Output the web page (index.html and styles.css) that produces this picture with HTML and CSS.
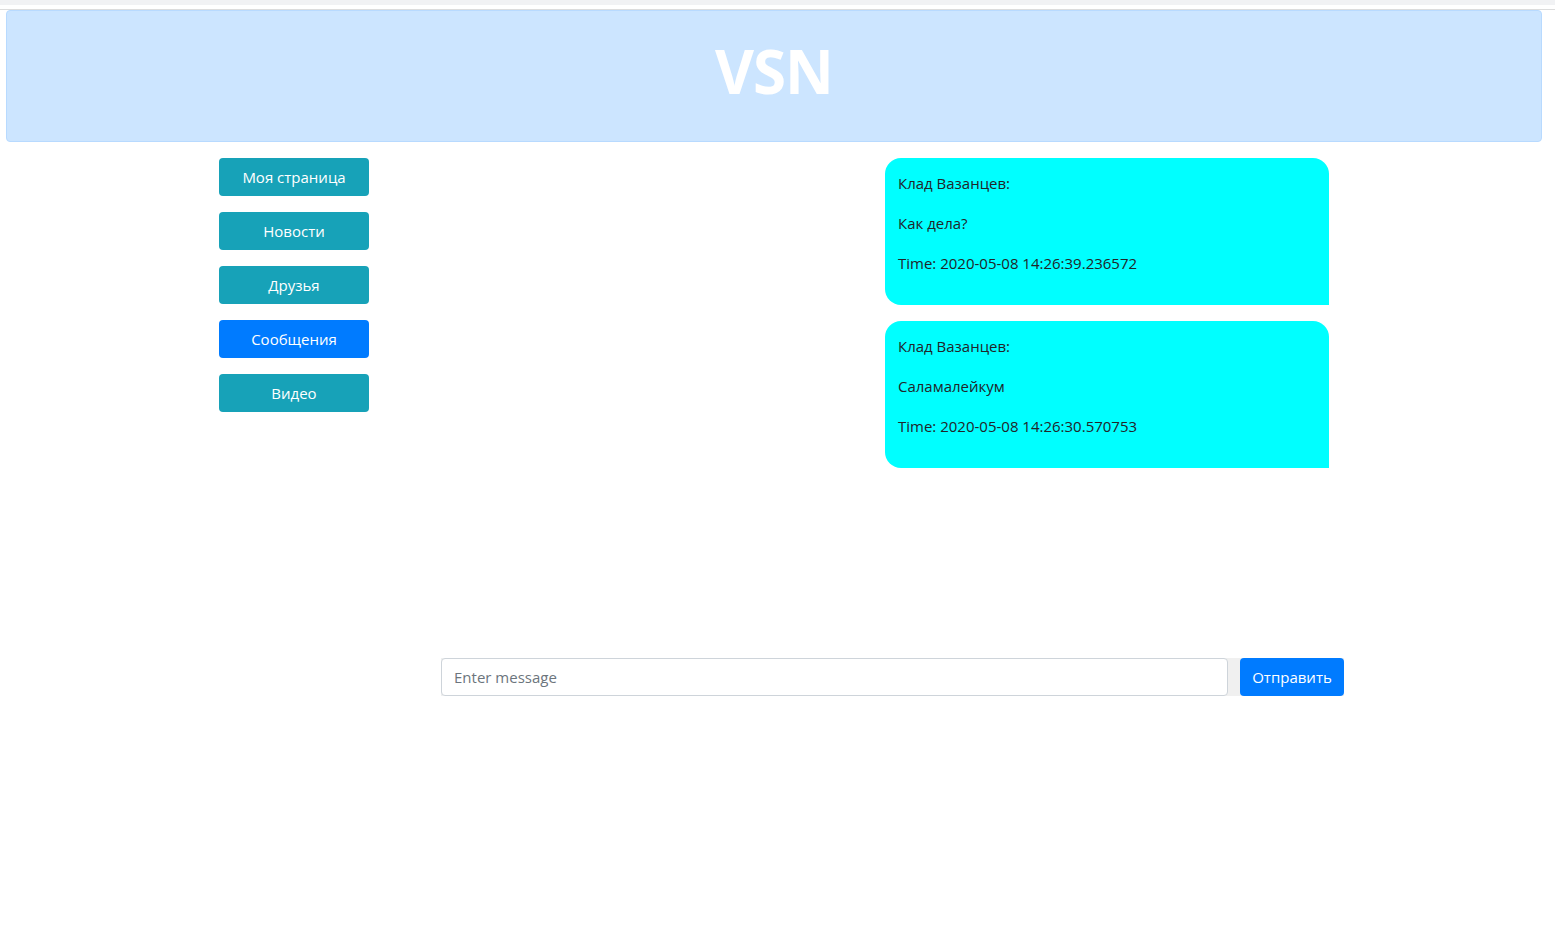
FILE: index.html
```html
<!DOCTYPE html>
<html lang="ru">
<head>
<meta charset="utf-8">
<title>VSN</title>
<link rel="stylesheet" href="styles.css">
</head>
<body>
<div class="topbar"></div>
<div class="topline"></div>
<header class="banner"><h1 class="logo">VSN</h1></header>
<main class="layout">
  <nav class="sidebar">
    <a class="nav-btn info" href="#">Моя страница</a>
    <a class="nav-btn info" href="#">Новости</a>
    <a class="nav-btn info" href="#">Друзья</a>
    <a class="nav-btn primary" href="#">Сообщения</a>
    <a class="nav-btn info" href="#">Видео</a>
  </nav>
  <section class="chat">
    <div class="messages">
      <div class="bubble">
        <p>Клад Вазанцев:</p>
        <p>Как дела?</p>
        <p>Time: 2020-05-08 14:26:39.236572</p>
      </div>
      <div class="bubble">
        <p>Клад Вазанцев:</p>
        <p>Саламалейкум</p>
        <p>Time: 2020-05-08 14:26:30.570753</p>
      </div>
    </div>
    <form class="send-form">
      <input class="msg-input" type="text" placeholder="Enter message">
      <button class="send-btn" type="button">Отправить</button>
    </form>
  </section>
</main>
</body>
</html>
```
FILE: styles.css
```css
* { box-sizing: border-box; }
body {
  margin: 0;
  font-family: "Open Sans", "Noto Sans", sans-serif;
  color: #212529;
  background: #fff;
}
.topbar { height: 5px; background: #f1f2f4; }
.topline { height: 5px; border-bottom: 1px solid #dcdcdc; }
.banner {
  margin: 0 13px 0 6px;
  height: 132px;
  padding-bottom: 10px;
  background: #cce5ff;
  border: 1px solid #b8daff;
  border-radius: 4px;
  display: flex;
  align-items: center;
  justify-content: center;
}
.logo {
  margin: 0;
  color: #fff;
  font-size: 60px;
  font-weight: 700;
  letter-spacing: -1px;
  line-height: 1;
}
.layout {
  display: flex;
  padding: 16px 0 0 219px;
}
.sidebar {
  width: 150px;
  display: flex;
  flex-direction: column;
  gap: 16px;
}
.nav-btn {
  display: flex;
  align-items: center;
  justify-content: center;
  height: 38px;
  border-radius: 4px;
  color: #fff;
  text-decoration: none;
  font-size: 15px;
}
.nav-btn.info { background: #17a2b8; }
.nav-btn.primary { background: #007bff; }
.chat {
  margin-left: 72px;
  width: 903px;
  display: flex;
  flex-direction: column;
}
.messages {
  height: 500px;
  display: flex;
  flex-direction: column;
  align-items: flex-end;
  gap: 16px;
  padding-right: 15px;
}
.bubble {
  width: 444px;
  height: 147px;
  background: #00ffff;
  border-radius: 16px 16px 0 16px;
  padding: 14px 13px;
  font-size: 15px;
  color: #212529;
}
.bubble p {
  margin: 0 0 18px;
  line-height: 22px;
}
.send-form {
  display: flex;
  gap: 12px;
  background: #f0f0f0;
  margin: 0;
}
.msg-input {
  width: 787px;
  height: 38px;
  border: 1px solid #ced4da;
  border-radius: 4px;
  padding: 0 12px;
  font-family: inherit;
  font-size: 15px;
  color: #495057;
  background: #fff;
}
.msg-input::placeholder { color: #6c757d; }
.send-btn {
  width: 104px;
  height: 38px;
  border: none;
  border-radius: 4px;
  background: #007bff;
  color: #fff;
  font-family: inherit;
  font-size: 15px;
  padding: 0;
}
```
